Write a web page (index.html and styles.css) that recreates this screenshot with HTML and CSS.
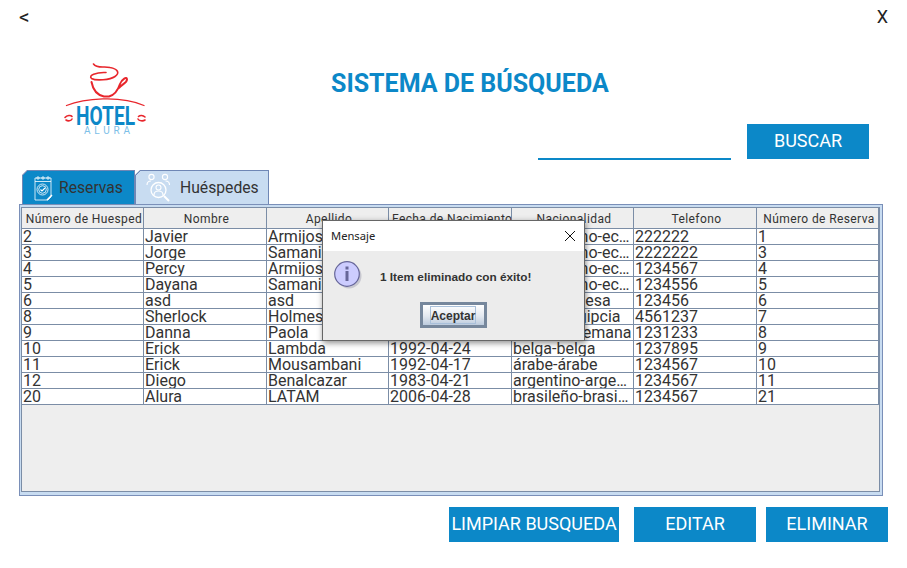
FILE: index.html
```html
<!DOCTYPE html>
<html lang="es">
<head>
<meta charset="utf-8">
<title>Sistema de búsqueda</title>
<link rel="stylesheet" href="styles.css">
</head>
<body>
<div class="app">
  <div class="top"><span class="back">&lt;</span><span>X</span></div>
  <div class="head">
    <svg class="logo" viewBox="50 55 110 85" width="110" height="85" aria-label="Hotel Alura">
      <g fill="none" stroke="#e8262c" stroke-linecap="round">
        <path d="M93.500 64C97 69 104 66 110 67.500C118 69 120 73 115 76.500C110 80 96 81 91.500 78.500C88 75.500 96 72 106 72.500" stroke-width="1.600"/>
        <path d="M91.500 82C93 90 97 95 104 96.500H109C115 95 118 90 120 84C122 79 127 76 127 79.500C127 83 122 84 119 88" stroke-width="2"/>
        <path d="M66.500 105.500C84 98.500 120 95 144 105.500" stroke-width="1.300"/>
        <path d="M65 117.500C67 115 71 115 72 116.500M66 120C68 121.500 71 121 72 119" stroke-width="1.600"/>
        <path d="M138 119C139 121 143 121.500 145 120M138.500 116.500C140 115 143 115 145 117" stroke-width="1.600"/>
      </g>
      <text class="logo-hotel" x="76" y="125" textLength="59" lengthAdjust="spacingAndGlyphs">HOTEL</text>
      <text class="logo-alura" x="84" y="134" textLength="46" lengthAdjust="spacing">ALURA</text>
    </svg>
    <div class="head-main">
      <h1 class="title">SISTEMA DE BÚSQUEDA</h1>
      <div class="search">
        <input class="search-input" type="text" aria-label="Buscar">
        <button class="btn btn-search">BUSCAR</button>
      </div>
    </div>
  </div>

  <div class="tabs">
    <div class="tab tab-reservas">
      <svg class="tab-icon" viewBox="0 0 20 26" width="20" height="26" fill="none" stroke="#fff" stroke-width="0.800">
        <path d="M2 3H18V22L15 25H2Z"/>
        <path d="M2 6.500H18"/>
        <circle cx="5" cy="3" r="1.200"/><circle cx="10" cy="3" r="1.200"/><circle cx="15" cy="3" r="1.200"/>
        <circle cx="9.500" cy="14.500" r="5.500"/>
        <circle cx="9.500" cy="14.500" r="3.800"/>
        <path d="M7.500 14.500L9 16L12 13" stroke-width="1.100"/>
        <path d="M14 25L19 20" stroke-width="1.500"/>
      </svg>
      <span>Reservas</span>
    </div>
    <div class="tab tab-huespedes">
      <svg class="tab-icon" viewBox="0 0 26 29" width="26" height="29" fill="none" stroke="#fff" stroke-width="1.100">
        <circle cx="5.500" cy="4" r="2.600"/>
        <circle cx="19" cy="4" r="2.600"/>
        <path d="M1 12C1 9 3 8 5 8M23.500 12C23.500 9 21.500 8 19.500 8"/>
        <circle cx="12.500" cy="17" r="7.500" stroke-width="1.300"/>
        <circle cx="12.500" cy="14.500" r="2.500"/>
        <path d="M8 22C8 18.500 10 18 12.500 18C15 18 17 18.500 17 22"/>
        <path d="M18 23L23 28" stroke-width="2"/>
      </svg>
      <span>Huéspedes</span>
    </div>
  </div>

  <div class="panel">
    <div class="scroll">
      <table class="grid">
        <thead>
          <tr><th>Número de Huesped</th><th>Nombre</th><th>Apellido</th><th>Fecha de Nacimiento</th><th>Nacionalidad</th><th>Telefono</th><th>Número de Reserva</th></tr>
        </thead>
        <tbody>
          <tr><td>2</td><td>Javier</td><td>Armijos</td><td>1990-04-12</td><td>ecuatoriano-ecuatoriana</td><td>222222</td><td>1</td></tr>
          <tr><td>3</td><td>Jorge</td><td>Samaniego</td><td>1985-04-10</td><td>ecuatoriano-ecuatoriana</td><td>2222222</td><td>3</td></tr>
          <tr><td>4</td><td>Percy</td><td>Armijos</td><td>1991-04-16</td><td>ecuatoriano-ecuatoriana</td><td>1234567</td><td>4</td></tr>
          <tr><td>5</td><td>Dayana</td><td>Samaniego</td><td>1993-04-14</td><td>ecuatoriano-ecuatoriana</td><td>1234556</td><td>5</td></tr>
          <tr><td>6</td><td>asd</td><td>asd</td><td>2000-04-20</td><td>inglés-inglesa</td><td>123456</td><td>6</td></tr>
          <tr><td>8</td><td>Sherlock</td><td>Holmes</td><td>1988-04-22</td><td>egipcio-egipcia</td><td>4561237</td><td>7</td></tr>
          <tr><td>9</td><td>Danna</td><td>Paola</td><td>1995-04-19</td><td class="fit">alemán-alemana</td><td>1231233</td><td>8</td></tr>
          <tr><td>10</td><td>Erick</td><td>Lambda</td><td>1992-04-24</td><td>belga-belga</td><td>1237895</td><td>9</td></tr>
          <tr><td>11</td><td>Erick</td><td>Mousambani</td><td>1992-04-17</td><td>árabe-árabe</td><td>1234567</td><td>10</td></tr>
          <tr><td>12</td><td>Diego</td><td>Benalcazar</td><td>1983-04-21</td><td>argentino-argentina</td><td>1234567</td><td>11</td></tr>
          <tr><td>20</td><td>Alura</td><td>LATAM</td><td>2006-04-28</td><td>brasileño-brasileña</td><td>1234567</td><td>21</td></tr>
        </tbody>
      </table>
    </div>
  </div>

  <div class="actions">
    <button class="btn btn-clear">LIMPIAR BUSQUEDA</button>
    <button class="btn btn-edit">EDITAR</button>
    <button class="btn btn-delete">ELIMINAR</button>
  </div>

  <div class="dialog" role="dialog">
    <div class="dialog-title">
      <span>Mensaje</span>
      <svg class="dialog-close" viewBox="0 0 12 12" width="12" height="12" fill="none" stroke="#111" stroke-width="1"><path d="M1 1L11 11M11 1L1 11"/></svg>
    </div>
    <div class="dialog-body">
      <div class="dialog-msg">
        <svg class="info" viewBox="0 0 30 30" width="30" height="30">
          <circle cx="15" cy="15" r="12.500" fill="#b9b9c4" opacity="0.700"/>
          <circle cx="13" cy="13" r="12.300" fill="#ccccff" stroke="#666699" stroke-width="1.200"/>
          <rect x="11.500" y="5.500" width="3" height="3" fill="#666699"/>
          <rect x="11.500" y="10" width="3" height="10" fill="#666699"/>
        </svg>
        <span class="dialog-text">1 Item eliminado con éxito!</span>
      </div>
      <button class="dialog-btn"><span>Aceptar</span></button>
    </div>
  </div>
</div>
</body>
</html>
```
FILE: styles.css
```css
* { box-sizing: border-box; }
html, body { margin: 0; padding: 0; background: #fff; overflow: hidden; }
.app {
  position: relative;
  width: 907px;
  height: 568px;
  font-family: Roboto, "Liberation Sans", sans-serif;
  color: #333;
  background: #fff;
  display: flex;
  flex-direction: column;
}
.top {
  height: 55px;
  padding: 6px 19px 0 19px;
  display: flex;
  justify-content: space-between;
  font-size: 18px;
  line-height: 22px;
  color: #222;
}
.back { font-size: 21px; }
.head { height: 115px; display: flex; }
.logo { display: block; margin-left: 50px; flex: none; }
.logo-hotel { font: 700 25px Roboto, sans-serif; fill: #0c88c8; }
.logo-alura { font: 400 10px Roboto, sans-serif; fill: #7cc0e8; }
.head-main { flex: 1; }
.title {
  margin: 0;
  height: 69px;
  padding: 15px 0 0 171px;
  font-size: 25px;
  line-height: 28px;
  font-weight: 700;
  color: #0c88c8;
}
.search { display: flex; gap: 16px; margin-left: 378px; align-items: flex-end; }
.search-input {
  width: 193px;
  height: 20px;
  border: 0;
  border-bottom: 2px solid #0c88c8;
  outline: 0;
  background: transparent;
  margin-bottom: -1px;
}
.btn {
  border: 0;
  padding: 0 0 2px;
  background: #0c88c8;
  color: #fff;
  font-family: Roboto, sans-serif;
  font-size: 18px;
  white-space: nowrap;
}
.btn-search { width: 122px; height: 35px; }
.tabs { display: flex; margin-left: 22px; height: 34px; }
.tab {
  display: flex;
  align-items: center;
  font-size: 15.7px;
  color: #333;
  border: 1px solid #6f87b5;
  border-bottom: 0;
  clip-path: polygon(5px 0, 100% 0, 100% 100%, 0 100%, 0 5px);
  background-origin: border-box;
}
.tab-reservas {
  width: 113px;
  padding-left: 10px;
  gap: 6px;
  background-image: linear-gradient(135deg, #6f87b5 4.6px, #0c88c8 4.6px);
}
.tab-huespedes {
  width: 134px;
  padding-left: 10px;
  gap: 8px;
  background-image: linear-gradient(135deg, #6f87b5 4.6px, #c8dcf1 4.6px);
}
.tab-icon { flex: none; }
.panel {
  margin-left: 19px;
  width: 864px;
  height: 292px;
  border: 1px solid #7a8fb8;
  background: #c8dcf1;
  padding: 2px 2px 3px 1px;
}
.scroll {
  width: 100%;
  height: 100%;
  background: #eee;
  border: 1px solid #7b8da6;
}
.grid {
  width: 857px;
  table-layout: fixed;
  border-collapse: separate;
  border-spacing: 0;
  background: #fff;
}
.grid th {
  height: 20px;
  padding: 3px 0 0 3px;
  font-size: 12px;
  font-weight: 400;
  line-height: 17px;
  letter-spacing: 0.4px;
  color: #333;
  background: #eee;
  text-align: center;
  border-right: 1px solid #7b8da6;
  border-bottom: 1px solid #7b8da6;
  white-space: nowrap;
  overflow: hidden;
}
.grid th:nth-child(odd) { width: 122px; }
.grid th:nth-child(even) { width: 123px; }
.grid td {
  height: 16px;
  padding: 0 2px 0 1px;
  font-size: 16px;
  line-height: 15px;
  color: #333;
  border-right: 1px solid #7b8da6;
  border-bottom: 1px solid #7b8da6;
  white-space: nowrap;
  overflow: hidden;
  text-overflow: ellipsis;
}
.grid td.fit { padding-right: 0; }
.actions { display: flex; margin: 11px 0 0 449px; height: 35px; }
.actions .btn { height: 35px; }
.btn-clear { width: 170px; margin-right: 15px; }
.btn-edit { width: 122px; margin-right: 10px; }
.btn-delete { width: 122px; }
.dialog {
  position: absolute;
  left: 322px;
  top: 220px;
  width: 263px;
  height: 121px;
  border: 1px solid #666;
  background: #ececec;
  box-shadow: 1px 2px 6px rgba(0, 0, 0, 0.45);
  font-family: "Liberation Sans", sans-serif;
}
.dialog-title {
  height: 30px;
  background: #fff;
  padding: 0 8px 1px;
  display: flex;
  align-items: center;
  justify-content: space-between;
  font-family: "Noto Sans", "Open Sans", sans-serif;
  font-size: 11.2px;
  color: #222;
}
.dialog-close { flex: none; }
.dialog-body { display: flex; flex-direction: column; align-items: center; }
.dialog-msg { width: 100%; height: 51px; display: flex; align-items: flex-start; padding: 10px 0 0 11px; }
.dialog-text { margin: 9px 0 0 16px; font-size: 11.8px; font-weight: 700; color: #333; }
.info { flex: none; }
.dialog-btn {
  width: 67px;
  height: 26px;
  padding: 0 1px 0 0;
  border: 3px solid #76879c;
  background: linear-gradient(#fff, #e4e9f0 55%, #bccbdd);
  font-family: "Liberation Sans", sans-serif;
  font-size: 12px;
  font-weight: 700;
  color: #333;
  display: flex;
  align-items: center;
  justify-content: center;
}
.dialog-btn span { border: 1px solid #a9c0da; padding: 2px 0 0; line-height: 14px; }
```
